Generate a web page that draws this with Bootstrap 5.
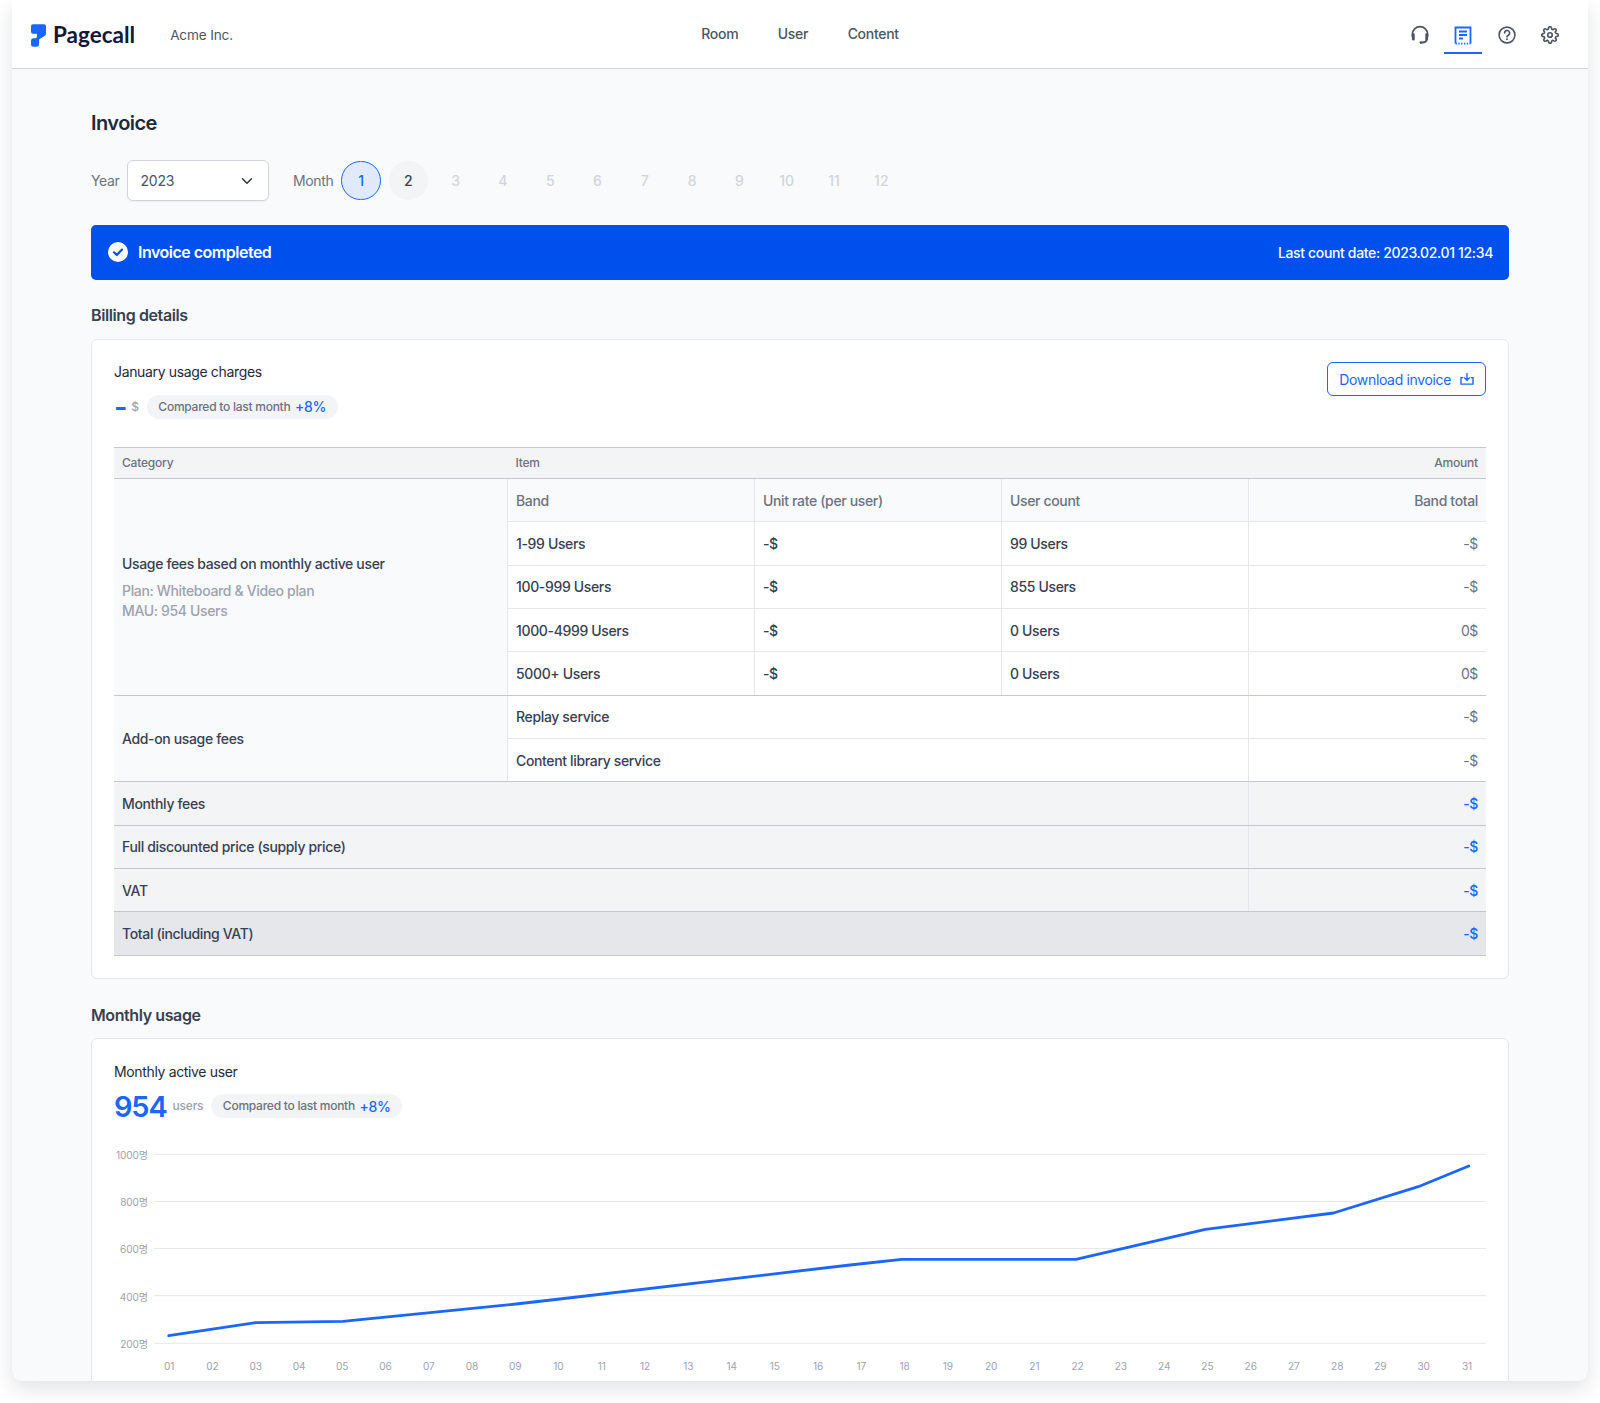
<!DOCTYPE html>
<html lang="en">
<head>
<meta charset="utf-8">
<title>Invoice</title>
<link href="https://cdn.jsdelivr.net/npm/bootstrap@5.3.0/dist/css/bootstrap.min.css" rel="stylesheet">
<style>
html,body{background:#fff;}
body{font-family:Inter,"Noto Sans CJK KR",sans-serif;font-size:14px;letter-spacing:-.35px;color:#374151;margin:0;}
.shell{margin:0 12px 22px;height:1381px;overflow:hidden;background:#f9fafb;border-radius:0 0 10px 10px;box-shadow:0 8px 20px rgba(17,24,39,.12);}
.topbar{height:69px;background:#fff;border-bottom:1px solid #d1d5db;padding:0 16px 0 19px;}
.side{flex:1 1 0;}
.side-left{padding-top:2px;}
.brand{font-family:Lato,sans-serif;font-weight:700;font-size:22.5px;color:#14163a;margin-left:7px;line-height:1;letter-spacing:0;}
.org{margin-left:35px;font-size:13.6px;letter-spacing:-.15px;color:#4b5563;}
.menu{gap:39.5px;font-weight:500;color:#4b5563;padding-bottom:1px;letter-spacing:-.3px;margin-right:3px;}
.tool{width:43.5px;height:40px;padding-top:4px;border-bottom:2px solid transparent;}
.tool.on{border-bottom-color:#1a66ff;width:38px;margin:0 2.75px;}
.page{padding:0 79px;}
.title{font-size:20px;font-weight:600;letter-spacing:-.55px;color:#1f2937;margin:40.5px 0 0;line-height:26px;}
.filters{margin-top:24.5px;height:41px;}
.lab{color:#6b7280;}
.yearsel{width:141.5px;height:41px;margin-left:8px;margin-right:24px;font-size:14px;letter-spacing:-.2px;color:#4b5563;border-color:#d1d5db;border-radius:6px;padding:0 12px;box-shadow:0 1px 2px rgba(0,0,0,.05);background-position:right 13px center;}
.months{gap:8px;margin-left:8px;}
.mon{width:39.3px;height:39.3px;padding:0;border:1px solid transparent;border-radius:50%;font-size:14px;font-weight:500;color:#d1d5db;background:transparent;}
.mon.cur{background:#e1eafc;border-color:#1a66ff;color:#1a66ff;}
.mon.has{background:#f3f4f6;color:#374151;}
.banner{height:55px;margin-top:23.5px;background:#0050ee;border-radius:5px;color:#fff;padding:0 16px 0 17px;font-weight:500;}
.banner b{font-size:16px;font-weight:600;letter-spacing:-.5px;margin-left:10px;}
.sect{font-size:16px;font-weight:600;letter-spacing:-.4px;color:#374151;line-height:22px;margin-top:24.5px;}
.sect2{margin-top:25px;}
.panel{background:#fff;border:1.5px solid #e5e7eb;border-radius:6px;padding:22px;margin-top:13px;}
.panel2{margin-top:12px;padding-top:23px;}
.ptitle{font-size:14px;font-weight:400;color:#1f2937;line-height:20px;}
.metric{margin-top:10px;}
.bignum{font-size:29px;font-weight:600;letter-spacing:-1.2px;color:#1a66ff;line-height:1;margin-right:-2px;}
.dash{margin-right:-3px;}
.unit{font-size:12px;font-weight:500;letter-spacing:-.2px;color:#9ca3af;}
.cmp{height:24px;padding:0 12px 0 11.5px;border-radius:12px;background:#f3f4f6;font-size:12px;font-weight:500;letter-spacing:-.25px;color:#6b7280;gap:4.5px;}
.cmp span{font-size:14px;letter-spacing:-.35px;color:#1a66ff;}
.dl{height:34px;padding:0 11px;border:1px solid #1a66ff;border-radius:6px;color:#1a66ff;font-size:14px;font-weight:400;letter-spacing:-.35px;background:#fff;gap:9px;}
.dl:hover{color:#1a66ff;background:#fff;border-color:#1a66ff;}
.inv{table-layout:fixed;width:1372px;margin:26px 0 0;font-weight:500;}
.c1{width:393.5px}.c2,.c3,.c4{width:247px}.c5{width:237.5px}
.inv>thead>tr>th{height:31px;padding:0 8px;background:#f3f4f6;font-size:12px;font-weight:500;letter-spacing:-.2px;color:#6b7280;border-top:1.5px solid #c4c7cd;border-bottom:1.5px solid #c4c7cd;vertical-align:middle;}
.inv>tbody>tr>td{height:43.33px;padding:0 8px;vertical-align:middle;color:#374151;background:#fff;border:0 solid #e5e7eb;border-bottom-width:1px;border-left-width:1px;}
.inv>tbody>tr>td.cat{background:#f9fafb;border-left-width:0;border-bottom:1.5px solid #c4c7cd;}
.inv>tbody>tr>td.hd{background:#f9fafb;color:#6b7280;}
.inv>tbody>tr>td.amt{color:#6b7280;font-weight:400;text-align:right;}
.inv>tbody>tr.endrow>td{border-bottom:1.5px solid #c4c7cd;}
.inv>tbody>tr.sum>td{background:#f3f4f6;border-bottom:1.5px solid #c4c7cd;border-left-width:0;}
.inv>tbody>tr.sum>td.blue{border-left-width:1px;color:#1a66ff;text-align:right;font-weight:500;}
.inv>tbody>tr.tot>td{background:#e5e7eb;}
.inv>tbody>tr.tot>td.blue{border-left-width:0;}
.sub{display:block;color:#9ca3af;font-weight:500;line-height:20px;}
.mainline{display:block;margin-bottom:7px;}
.chart{display:block;width:1372px;height:240px;margin-top:19px;}
.chart text{font-family:Inter,"Noto Sans CJK KR",sans-serif;font-size:10.1px;letter-spacing:-.1px;fill:#9ca3af;}
.chart .mid{text-anchor:middle;}
.chart .end{text-anchor:end;}
</style>
</head>
<body>
<div class="shell">
  <header class="topbar d-flex align-items-center">
    <div class="side side-left d-flex align-items-center">
      <svg width="15" height="23" viewBox="0 0 15 22.5" aria-hidden="true"><path fill="#1a66ff" d="M2 0H13a2 2 0 0 1 2 2V9.5a2.5 2.5 0 0 1-1.2 2.1L8 15.2V20a2.5 2.5 0 0 1-2.5 2.5H2.5A2.5 2.5 0 0 1 0 20V16.5A2.5 2.5 0 0 1 2.5 14H4a2 2 0 0 0 2-1.5V10.5a1 1 0 0 0-1-1H2a2 2 0 0 1-2-2V2a2 2 0 0 1 2-2z"/></svg>
      <span class="brand">Pagecall</span>
      <span class="org">Acme Inc.</span>
    </div>
    <nav class="menu d-flex">
      <span>Room</span><span>User</span><span>Content</span>
    </nav>
    <div class="side d-flex justify-content-end align-items-center">
      <div class="tool d-flex align-items-center justify-content-center">
        <svg width="20" height="20" viewBox="0 0 20 20" fill="none" stroke="#4b5563" stroke-width="1.8" stroke-linecap="round"><path d="M2.4 11V9.2a7.6 7.6 0 0 1 15.2 0V11"/><path d="M3.3 9.6v4.6M16.7 9.6v4.6" stroke-width="2.8"/><path d="M16.8 14.5c-.4 2.2-2 3-4.6 3"/><circle cx="11" cy="17.6" r="1.4" fill="#4b5563" stroke="none"/></svg>
      </div>
      <div class="tool on d-flex align-items-center justify-content-center">
        <svg width="18" height="19" viewBox="0 0 18 19" fill="none" stroke="#1a66ff" stroke-width="1.8"><path d="M1.5 17.5V1.5h15v16"/><path d="M1.5 17.6h15" stroke-dasharray="1.4 1.4"/><path d="M5 5.5h8M5 9h8M5 12.5h4"/></svg>
      </div>
      <div class="tool d-flex align-items-center justify-content-center">
        <svg width="18" height="18" viewBox="0 0 18 18" fill="none" stroke="#4b5563" stroke-width="1.6" stroke-linecap="round"><circle cx="9" cy="9" r="7.9"/><path d="M6.6 7a2.5 2.5 0 1 1 3.7 2.2c-.8.4-1.3 1-1.3 1.8"/><circle cx="9" cy="13.3" r=".95" fill="#4b5563" stroke="none"/></svg>
      </div>
      <div class="tool d-flex align-items-center justify-content-center">
        <svg width="18" height="18" viewBox="0 0 24 24" fill="none" stroke="#4b5563" stroke-width="2.2" stroke-linecap="round" stroke-linejoin="round"><circle cx="12" cy="12" r="3"/><path d="M19.4 15a1.65 1.65 0 0 0 .33 1.82l.06.06a2 2 0 0 1 0 2.83 2 2 0 0 1-2.83 0l-.06-.06a1.65 1.65 0 0 0-1.82-.33 1.65 1.65 0 0 0-1 1.51V21a2 2 0 0 1-2 2 2 2 0 0 1-2-2v-.09A1.65 1.65 0 0 0 9 19.4a1.65 1.65 0 0 0-1.82.33l-.06.06a2 2 0 0 1-2.83 0 2 2 0 0 1 0-2.83l.06-.06a1.65 1.65 0 0 0 .33-1.82 1.65 1.65 0 0 0-1.51-1H3a2 2 0 0 1-2-2 2 2 0 0 1 2-2h.09A1.65 1.65 0 0 0 4.6 9a1.65 1.65 0 0 0-.33-1.82l-.06-.06a2 2 0 0 1 0-2.83 2 2 0 0 1 2.83 0l.06.06a1.65 1.65 0 0 0 1.82.33H9a1.65 1.65 0 0 0 1-1.51V3a2 2 0 0 1 2-2 2 2 0 0 1 2 2v.09a1.65 1.65 0 0 0 1 1.51 1.65 1.65 0 0 0 1.82-.33l.06-.06a2 2 0 0 1 2.83 0 2 2 0 0 1 0 2.83l-.06.06a1.65 1.65 0 0 0-.33 1.82V9a1.65 1.65 0 0 0 1.51 1H21a2 2 0 0 1 2 2 2 2 0 0 1-2 2h-.09a1.65 1.65 0 0 0-1.51 1z"/></svg>
      </div>
    </div>
  </header>

  <main class="page">
    <h1 class="title">Invoice</h1>
    <div class="filters d-flex align-items-center">
      <span class="lab">Year</span>
      <select class="form-select yearsel"><option>2023</option></select>
      <span class="lab">Month</span>
      <div class="months d-flex">
        <button class="mon cur">1</button><button class="mon has">2</button><button class="mon">3</button><button class="mon">4</button><button class="mon">5</button><button class="mon">6</button><button class="mon">7</button><button class="mon">8</button><button class="mon">9</button><button class="mon">10</button><button class="mon">11</button><button class="mon">12</button>
      </div>
    </div>

    <div class="banner d-flex align-items-center">
      <svg width="20" height="20" viewBox="0 0 20 20"><circle cx="10" cy="10" r="10" fill="#fff"/><path d="M6 10.3l2.8 2.7L14 7.6" fill="none" stroke="#0050ee" stroke-width="2.2" stroke-linecap="round" stroke-linejoin="round"/></svg>
      <b>Invoice completed</b>
      <span class="ms-auto">Last count date: 2023.02.01 12:34</span>
    </div>

    <div class="sect">Billing details</div>
    <section class="panel">
      <div class="d-flex justify-content-between align-items-start">
        <div>
          <div class="ptitle">January usage charges</div>
          <div class="metric d-flex align-items-center gap-2">
            <span class="bignum dash">-</span>
            <span class="unit">$</span>
            <span class="cmp d-inline-flex align-items-center">Compared to last month <span>+8%</span></span>
          </div>
        </div>
        <button class="btn dl d-inline-flex align-items-center">Download invoice
          <svg width="14" height="12" viewBox="0 0 15 13" fill="none" stroke="#1a66ff" stroke-width="1.5"><path d="M3.5 5H1v7h13V5h-2.5"/><path d="M7.5 .5v7M5 5.4l2.5 2.5L10 5.4" stroke-linecap="round" stroke-linejoin="round"/></svg>
        </button>
      </div>

      <table class="table inv">
        <colgroup><col class="c1"><col class="c2"><col class="c3"><col class="c4"><col class="c5"></colgroup>
        <thead>
          <tr><th>Category</th><th colspan="3">Item</th><th class="text-end">Amount</th></tr>
        </thead>
        <tbody>
          <tr>
            <td class="cat" rowspan="5"><span class="mainline">Usage fees based on monthly active user</span><span class="sub">Plan: Whiteboard &amp; Video plan</span><span class="sub">MAU: 954 Users</span></td>
            <td class="hd">Band</td><td class="hd">Unit rate (per user)</td><td class="hd">User count</td><td class="hd text-end">Band total</td>
          </tr>
          <tr><td>1-99 Users</td><td>-$</td><td>99 Users</td><td class="amt">-$</td></tr>
          <tr><td>100-999 Users</td><td>-$</td><td>855 Users</td><td class="amt">-$</td></tr>
          <tr><td>1000-4999 Users</td><td>-$</td><td>0 Users</td><td class="amt">0$</td></tr>
          <tr class="endrow"><td>5000+ Users</td><td>-$</td><td>0 Users</td><td class="amt">0$</td></tr>
          <tr><td class="cat" rowspan="2">Add-on usage fees</td><td colspan="3">Replay service</td><td class="amt">-$</td></tr>
          <tr class="endrow"><td colspan="3">Content library service</td><td class="amt">-$</td></tr>
          <tr class="sum"><td colspan="4">Monthly fees</td><td class="blue">-$</td></tr>
          <tr class="sum"><td colspan="4">Full discounted price (supply price)</td><td class="blue">-$</td></tr>
          <tr class="sum"><td colspan="4">VAT</td><td class="blue">-$</td></tr>
          <tr class="sum tot"><td colspan="4">Total (including VAT)</td><td class="blue">-$</td></tr>
        </tbody>
      </table>
    </section>

    <div class="sect sect2">Monthly usage</div>
    <section class="panel panel2">
      <div class="ptitle">Monthly active user</div>
      <div class="metric d-flex align-items-center gap-2">
        <span class="bignum">954</span>
        <span class="unit">users</span>
        <span class="cmp d-inline-flex align-items-center">Compared to last month <span>+8%</span></span>
      </div>
      <svg class="chart" viewBox="114 1140 1372 240" aria-label="Monthly active user chart">
        <g stroke="#e5e7eb" stroke-width="1">
          <line x1="154" x2="1486" y1="1154.3" y2="1154.3"/>
          <line x1="154" x2="1486" y1="1201.5" y2="1201.5"/>
          <line x1="154" x2="1486" y1="1248.5" y2="1248.5"/>
          <line x1="154" x2="1486" y1="1295.7" y2="1295.7"/>
          <line x1="154" x2="1486" y1="1343.3" y2="1343.3"/>
        </g>
        <g>
          <text class="end" x="148" y="1159">1000명</text>
          <text class="end" x="148" y="1206">800명</text>
          <text class="end" x="148" y="1253">600명</text>
          <text class="end" x="148" y="1301">400명</text>
          <text class="end" x="148" y="1348">200명</text>
        </g>
        <polyline fill="none" stroke="#1a66ff" stroke-width="2.8" stroke-linecap="round" stroke-linejoin="round" points="168.75,1335.7 255.8,1322.7 342.9,1321.3 516,1304 559.8,1299 850,1265 901.8,1259.3 1075.9,1259.3 1205.4,1229.3 1333.5,1213 1418.3,1186.7 1468.8,1166"/>
        <g>
          <text class="mid" x="169.2" y="1370">01</text><text class="mid" x="212.5" y="1370">02</text><text class="mid" x="255.7" y="1370">03</text><text class="mid" x="299" y="1370">04</text><text class="mid" x="342.2" y="1370">05</text><text class="mid" x="385.5" y="1370">06</text><text class="mid" x="428.8" y="1370">07</text><text class="mid" x="472" y="1370">08</text><text class="mid" x="515.3" y="1370">09</text><text class="mid" x="558.5" y="1370">10</text><text class="mid" x="601.8" y="1370">11</text><text class="mid" x="645" y="1370">12</text><text class="mid" x="688.3" y="1370">13</text><text class="mid" x="731.6" y="1370">14</text><text class="mid" x="774.8" y="1370">15</text><text class="mid" x="818.1" y="1370">16</text><text class="mid" x="861.3" y="1370">17</text><text class="mid" x="904.6" y="1370">18</text><text class="mid" x="947.9" y="1370">19</text><text class="mid" x="991.1" y="1370">20</text><text class="mid" x="1034.4" y="1370">21</text><text class="mid" x="1077.6" y="1370">22</text><text class="mid" x="1120.9" y="1370">23</text><text class="mid" x="1164.2" y="1370">24</text><text class="mid" x="1207.4" y="1370">25</text><text class="mid" x="1250.7" y="1370">26</text><text class="mid" x="1293.9" y="1370">27</text><text class="mid" x="1337.2" y="1370">28</text><text class="mid" x="1380.4" y="1370">29</text><text class="mid" x="1423.7" y="1370">30</text><text class="mid" x="1467" y="1370">31</text>
        </g>
      </svg>
    </section>
  </main>
</div>
<script src="https://cdn.jsdelivr.net/npm/bootstrap@5.3.0/dist/js/bootstrap.bundle.min.js"></script>
</body>
</html>
